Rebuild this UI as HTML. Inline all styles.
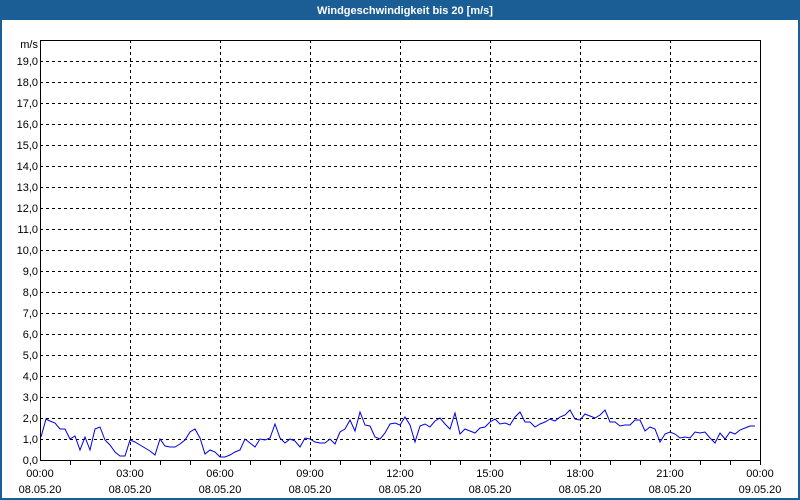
<!DOCTYPE html>
<html><head><meta charset="utf-8"><style>
html,body{margin:0;padding:0;width:800px;height:500px;overflow:hidden;background:#fff}
svg{display:block}
text{font-family:"Liberation Sans",sans-serif;font-size:11px;fill:#000}
</style></head><body>
<svg width="800" height="500" xmlns="http://www.w3.org/2000/svg">
<rect x="0" y="0" width="800" height="500" fill="#1b5e96"/>
<rect x="2" y="20" width="796" height="478" fill="#fff"/>
<text x="405" y="14" text-anchor="middle" style="fill:#fff;font-weight:bold;font-size:11px">Windgeschwindigkeit bis 20 [m/s]</text>
<g stroke="#000" stroke-width="1" stroke-dasharray="3,3" fill="none" shape-rendering="crispEdges">
<path d="M40 439.5H760M40 418.5H760M40 397.5H760M40 376.5H760M40 355.5H760M40 334.5H760M40 313.5H760M40 292.5H760M40 271.5H760M40 250.5H760M40 229.5H760M40 208.5H760M40 187.5H760M40 166.5H760M40 145.5H760M40 124.5H760M40 103.5H760M40 82.5H760M40 61.5H760"/>
<path d="M130.5 40V460M220.5 40V460M310.5 40V460M400.5 40V460M490.5 40V460M580.5 40V460M670.5 40V460"/>
</g>
<g stroke="#000" stroke-width="1" fill="none" shape-rendering="crispEdges">
<path d="M40.5 40V460.5H760.5V40.5H40"/>
<path d="M70.5 460v5M100.5 460v5M130.5 460v5M160.5 460v5M190.5 460v5M220.5 460v5M250.5 460v5M280.5 460v5M310.5 460v5M340.5 460v5M370.5 460v5M400.5 460v5M430.5 460v5M460.5 460v5M490.5 460v5M520.5 460v5M550.5 460v5M580.5 460v5M610.5 460v5M640.5 460v5M670.5 460v5M700.5 460v5M730.5 460v5M760.5 460v5"/>
</g>
<polyline fill="none" stroke="#0000e0" stroke-width="1" points="41,437 46,419 50,421 55,423 60,429 65,429 70,439 75,436 80,450 85,437 90,450 95,429 100,427 105,440 110,445 115,452 120,456 125,456 130,440 135,442 140,445 145,448 150,451 155,455 160,439 165,446 170,447 175,447 180,444 185,440 190,432 195,429 200,438 205,454 210,450 215,452 220,457 225,457 230,455 235,452 240,450 245,439 250,443 255,447 260,439 265,440 270,438 275,424 280,438 285,443 290,439 295,441 300,447 305,438 310,439 315,442 320,443 325,443 330,439 335,444 340,432 345,429 350,420 355,431 360,412 365,425 370,426 375,437 380,439 385,433 390,424 395,423 400,425 405,417 410,425 415,442 420,426 425,424 430,427 435,421 440,418 445,424 450,429 455,413 460,434 465,429 470,431 475,433 480,428 485,427 490,422 495,419 500,424 505,423 510,425 515,417 520,412 525,422 530,422 535,427 540,424 545,422 550,419 555,421 560,417 565,415 570,410 575,419 580,420 585,414 590,416 595,418 600,415 605,410 610,422 615,422 620,426 625,425 630,425 635,420 640,420 645,431 650,427 655,429 660,442 665,434 670,432 675,434 680,438 685,437 690,438 695,432 700,433 705,432 710,438 715,443 720,433 725,439 730,432 735,434 740,430 745,428 750,426 755,426"/>
<g text-anchor="end">
<text x="38" y="48">m/s</text>
<text x="38" y="65">19,0</text><text x="38" y="86">18,0</text><text x="38" y="107">17,0</text><text x="38" y="128">16,0</text><text x="38" y="149">15,0</text><text x="38" y="170">14,0</text><text x="38" y="191">13,0</text><text x="38" y="212">12,0</text><text x="38" y="233">11,0</text><text x="38" y="254">10,0</text><text x="38" y="275">9,0</text><text x="38" y="296">8,0</text><text x="38" y="317">7,0</text><text x="38" y="338">6,0</text><text x="38" y="359">5,0</text><text x="38" y="380">4,0</text><text x="38" y="401">3,0</text><text x="38" y="422">2,0</text><text x="38" y="443">1,0</text><text x="38" y="464">0,0</text>
</g>
<g text-anchor="middle">
<text x="40" y="477">00:00</text><text x="40" y="493">08.05.20</text>
<text x="130" y="477">03:00</text><text x="130" y="493">08.05.20</text>
<text x="220" y="477">06:00</text><text x="220" y="493">08.05.20</text>
<text x="310" y="477">09:00</text><text x="310" y="493">08.05.20</text>
<text x="400" y="477">12:00</text><text x="400" y="493">08.05.20</text>
<text x="490" y="477">15:00</text><text x="490" y="493">08.05.20</text>
<text x="580" y="477">18:00</text><text x="580" y="493">08.05.20</text>
<text x="670" y="477">21:00</text><text x="670" y="493">08.05.20</text>
<text x="760" y="477">00:00</text><text x="760" y="493">09.05.20</text>
</g>
</svg>
</body></html>
